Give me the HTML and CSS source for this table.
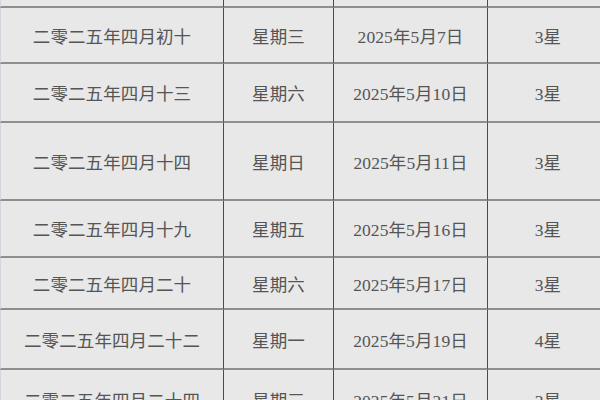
FILE: index.html
```html
<!DOCTYPE html>
<html lang="zh">
<head>
<meta charset="utf-8">
<link rel="stylesheet" href="styles.css">
</head>
<body>
<div class="sheet">
  <div class="cell"></div><div class="cell"></div><div class="cell"></div><div class="cell"></div>
  <div class="cell">二零二五年四月初十</div><div class="cell">星期三</div><div class="cell">2025年5月7日</div><div class="cell">3星</div>
  <div class="cell">二零二五年四月十三</div><div class="cell">星期六</div><div class="cell">2025年5月10日</div><div class="cell">3星</div>
  <div class="cell">二零二五年四月十四</div><div class="cell">星期日</div><div class="cell">2025年5月11日</div><div class="cell">3星</div>
  <div class="cell">二零二五年四月十九</div><div class="cell">星期五</div><div class="cell">2025年5月16日</div><div class="cell">3星</div>
  <div class="cell">二零二五年四月二十</div><div class="cell">星期六</div><div class="cell">2025年5月17日</div><div class="cell">3星</div>
  <div class="cell">二零二五年四月二十二</div><div class="cell">星期一</div><div class="cell">2025年5月19日</div><div class="cell">4星</div>
  <div class="cell">二零二五年四月二十四</div><div class="cell">星期三</div><div class="cell">2025年5月21日</div><div class="cell">3星</div>
</div>
</body>
</html>
```
FILE: styles.css
```css
html, body {
  margin: 0;
  padding: 0;
  background: #e8e8e8;
  overflow: hidden;
}
.sheet {
  display: grid;
  grid-template-columns: 224px 110px 154px 120px;
  grid-template-rows: 8px 56px 59px 78px 57px 52px 60px 60px;
  width: 608px;
  background: #e8e8e8;
  font-family: "Liberation Serif", "Noto Sans CJK SC", serif;
  font-size: 17.5px;
  color: #555;
}
.cell {
  display: flex;
  align-items: center;
  justify-content: center;
  white-space: nowrap;
  border-bottom: 2px solid #8e8e8e;
  border-right: 1px solid #4a4a4a;
  box-sizing: border-box;
  letter-spacing: 0.1px;
}
.cell:nth-child(4n+1) {
  border-left: 1px solid #d4d4dc;
}
.cell:nth-child(4n) {
  border-right: none;
}
```
